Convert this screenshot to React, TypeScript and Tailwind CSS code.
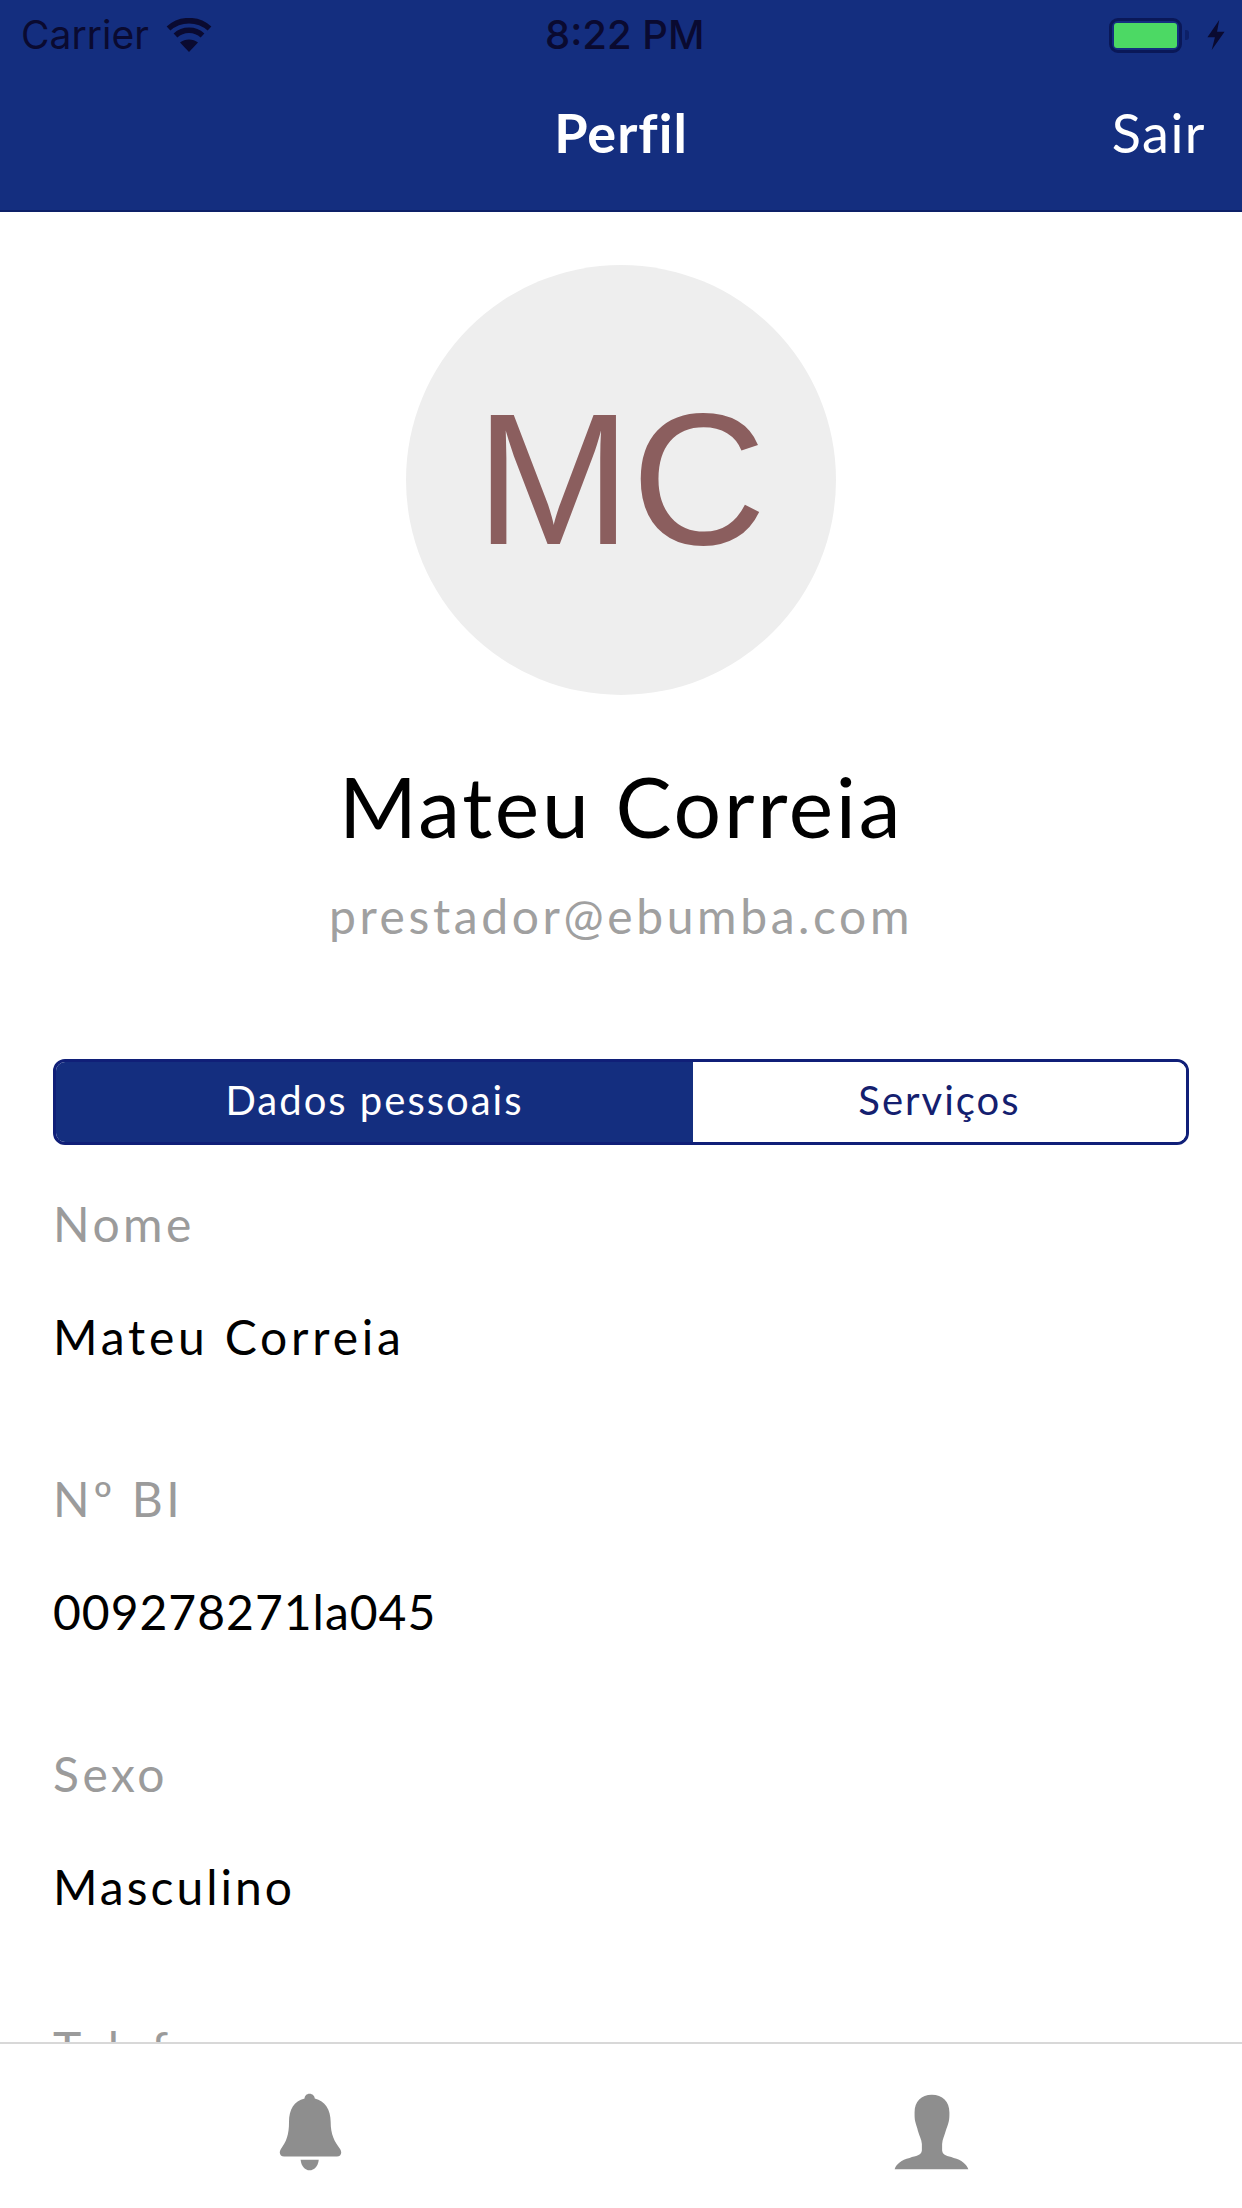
const font = "font-['Lato','Liberation_Sans',sans-serif]";

function Field({ label, value, mt, valueTracking = "tracking-[3px]" }: { label: string; value: string; mt: string; valueTracking?: string }) {
  return (
    <div className={mt}>
      <div className="text-[48px] leading-[56px] tracking-[3.500px] text-[#9b9b9b]">{label}</div>
      <div className={`mt-[57px] text-[48px] leading-[56px] text-black ${valueTracking}`}>{value}</div>
    </div>
  );
}

export default function App() {
  return (
    <div className={`relative h-[2208px] w-[1242px] overflow-hidden bg-white ${font}`}>
      <div className="h-[212px] border-b-2 border-[#0d2068] bg-[#142e7f]">
        <div className="flex h-[70px] items-center justify-between pl-[21px] pr-[17px] font-['Inter','Liberation_Sans',sans-serif] text-[39px] text-[#0a0a30]">
          <div className="flex items-center gap-[17px]">
            <span>Carrier</span>
            <svg width="46" height="34" viewBox="0 0 46 34" fill="none" stroke="#0a0a30" strokeWidth="5.500">
              <path d="M2.500 10.500C14 0 32 0 43.500 10.500" />
              <path d="M9.500 17.500C17 10.500 29 10.500 36.500 17.500" />
              <path d="M23 34 14 24.500C19 20.500 27 20.500 32 24.500Z" fill="#0a0a30" stroke="none" />
            </svg>
          </div>
          <span className="absolute left-[545px] text-[40px] font-medium">8:22 PM</span>
          <div className="flex items-center">
            <div className="rounded-[9px] border-[3px] border-[#0a1858] p-[2px]">
              <div className="h-[25px] w-[63px] rounded-[3px] bg-[#4cd964]" />
            </div>
            <div className="ml-[3px] h-[10px] w-[4px] rounded-r-[3px] bg-[#0d2068]" />
            <svg className="ml-[18px]" width="18" height="30" viewBox="0 0 16 28" fill="#0a0a30">
              <path d="M11 0 0 16h7l-3 12 12-17H9l2-11Z" />
            </svg>
          </div>
        </div>
        <div className="relative flex h-[128px] items-center justify-center pb-[4px] text-white">
          <span className="text-[54px] font-bold tracking-[1px]">Perfil</span>
          <span className="absolute right-[36px] text-[54px] tracking-[1.500px]">Sair</span>
        </div>
      </div>

      <div className="flex flex-col items-center">
        <div className="mt-[53px] flex h-[430px] w-[430px] items-center justify-center rounded-full bg-[#eeeeee] font-['Liberation_Sans',sans-serif] text-[187px] text-[#8b5e5e]">
          MC
        </div>
        <div className="mt-[64px] text-[84px] leading-[94px] tracking-[2.700px] text-black">Mateu Correia</div>
        <div className="mt-[33px] text-[48px] leading-[60px] tracking-[3.600px] text-[#a0a0a0]">prestador@ebumba.com</div>
      </div>

      <div className="mx-[53px] mt-[113px]">
        <div className="flex h-[86px] overflow-hidden rounded-[12px] border-[3px] border-[#101f78] text-[40px] tracking-[2px]">
          <div className="flex w-[637px] items-center justify-center bg-[#142e7f] pb-[4px] text-white">Dados pessoais</div>
          <div className="flex flex-1 items-center justify-center bg-white pb-[4px] text-[#14206f]">Serviços</div>
        </div>
        <Field label="Nome" value="Mateu Correia" mt="mt-[51px]" valueTracking="tracking-[3.800px]" />
        <Field label="Nº BI" value="009278271la045" mt="mt-[106px]" valueTracking="tracking-[1px]" />
        <Field label="Sexo" value="Masculino" mt="mt-[106px]" />
        <Field label="Telefone" value="" mt="mt-[106px]" />
      </div>

      <div className="absolute bottom-0 left-0 flex h-[166px] w-full border-t-2 border-[#d8d8d8] bg-white">
        <div className="flex flex-1 items-start justify-center pt-[49px]">
          <svg width="63" height="78" viewBox="120 98 190 236" fill="#8e8e8e">
            <path d="M212 100c-9 0-15 7-15 15C165 122 150 150 150 185C150 225 142 245 125 268C118 280 124 290 135 290H295C306 290 312 280 305 268C288 245 276 225 276 185C276 150 259 122 228 115C228 107 221 100 212 100Z" />
            <path d="M185 300H240C238 320 226 332 212 332C199 332 187 320 185 300Z" />
          </svg>
        </div>
        <div className="flex flex-1 items-start justify-center pt-[50px]">
          <svg width="75" height="76" viewBox="98 100 226 228" fill="#8e8e8e">
            <path d="M212 102C180 102 160 122 160 155C160 165 160 175 162 182C165 195 168 200 170 210C174 225 181 235 182 250V270C180 285 165 286 145 292C120 298 105 310 100 326H322C316 310 302 298 278 292C258 286 245 285 243 270V250C244 235 250 225 254 210C257 200 260 195 263 182C265 175 265 165 265 155C265 122 244 102 212 102Z" />
          </svg>
        </div>
      </div>
    </div>
  );
}
